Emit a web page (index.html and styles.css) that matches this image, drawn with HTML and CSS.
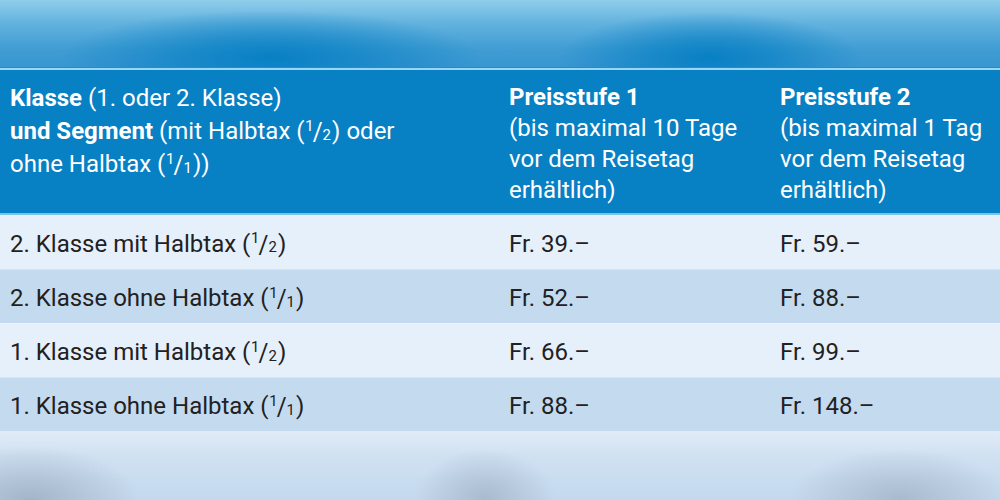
FILE: index.html
```html
<!DOCTYPE html>
<html lang="de">
<head>
<meta charset="utf-8">
<title>Preisstufen</title>
<link rel="stylesheet" href="styles.css">
</head>
<body>
<div class="page">
  <div class="top-band"></div>
  <div class="table">
    <div class="head">
      <div class="cell h1">
        <b>Klasse</b> (1. oder 2. Klasse)<br>
        <b>und Segment</b> (mit Halbtax (<span class="num">1</span><span class="sl">/</span><span class="den">2</span>) oder<br>
        ohne Halbtax (<span class="num">1</span><span class="sl">/</span><span class="den">1</span>))
      </div>
      <div class="cell h2"><b>Preisstufe 1</b><br>(bis maximal 10 Tage<br>vor dem Reisetag<br>erhältlich)</div>
      <div class="cell h3"><b>Preisstufe 2</b><br>(bis maximal 1 Tag<br>vor dem Reisetag<br>erhältlich)</div>
    </div>
    <div class="row light">
      <div class="cell">2. Klasse mit Halbtax (<span class="num">1</span><span class="sl">/</span><span class="den">2</span>)</div>
      <div class="cell">Fr. 39.–</div>
      <div class="cell">Fr. 59.–</div>
    </div>
    <div class="row dark">
      <div class="cell">2. Klasse ohne Halbtax (<span class="num">1</span><span class="sl">/</span><span class="den">1</span>)</div>
      <div class="cell">Fr. 52.–</div>
      <div class="cell">Fr. 88.–</div>
    </div>
    <div class="row light">
      <div class="cell">1. Klasse mit Halbtax (<span class="num">1</span><span class="sl">/</span><span class="den">2</span>)</div>
      <div class="cell">Fr. 66.–</div>
      <div class="cell">Fr. 99.–</div>
    </div>
    <div class="row dark">
      <div class="cell">1. Klasse ohne Halbtax (<span class="num">1</span><span class="sl">/</span><span class="den">1</span>)</div>
      <div class="cell">Fr. 88.–</div>
      <div class="cell">Fr. 148.–</div>
    </div>
  </div>
  <div class="bottom-band"></div>
</div>
</body>
</html>
```
FILE: styles.css
```css
* { box-sizing: border-box; }
html, body { margin: 0; padding: 0; }
body {
  width: 1000px;
  height: 500px;
  overflow: hidden;
  font-family: Roboto, "Noto Sans", sans-serif;
  font-size: 24px;
  color: #1f2123;
  background: #c6dbef;
}
.page { display: flex; flex-direction: column; height: 500px; }

.top-band {
  height: 68px;
  flex: none;
  background:
    radial-gradient(ellipse 210px 48px at 270px 58px, rgba(8,128,196,1), rgba(8,128,196,0.6) 45%, rgba(8,128,196,0) 100%),
    radial-gradient(ellipse 150px 46px at 710px 58px, rgba(8,128,196,1), rgba(8,128,196,0.6) 45%, rgba(8,128,196,0) 100%),
    linear-gradient(#8fcdeb 0%, #62b2de 35%, #3f9cd3 75%, #3896d0 100%);
  border-bottom: 1px solid #2d89c2;
}
.table { flex: none; }
.head {
  display: grid;
  grid-template-columns: 499px 271px 1fr;
  background: #0880c4;
  color: #ffffff;
  border-top: 2px solid #9ad6f1;
  border-bottom: 2px solid #79c4ea;
  height: 147px;
  padding: 12px 0 0 10px;
  line-height: 31px;
}
.head b { font-weight: 700; }
.head .h1 { line-height: 33px; }
.row {
  display: grid;
  grid-template-columns: 499px 271px 1fr;
  height: 54px;
  align-items: center;
  padding: 3px 0 0 10px;
}
.row.light { background: #e5f0fa; }
.row.dark { background: #c4dbef; }
.row + .row { border-top: 1px solid rgba(255,255,255,0.25); }

.num { font-size: 0.62em; line-height: 0; vertical-align: 0.55em; margin-left: 0.05em; }
.sl { display: inline-block; margin: 0 0 0 -0.04em; transform: scaleY(1.08); }
.den { font-size: 0.62em; line-height: 0; vertical-align: -0.05em; margin-right: 0.08em; }

.bottom-band {
  flex: 1;
  background:
    radial-gradient(ellipse 110px 55px at 30px 70px, rgba(160,178,198,0.95), rgba(160,178,198,0) 100%),
    radial-gradient(ellipse 70px 50px at 485px 68px, rgba(165,183,203,0.9), rgba(165,183,203,0) 100%),
    radial-gradient(ellipse 110px 50px at 900px 68px, rgba(165,183,203,0.9), rgba(165,183,203,0) 100%),
    linear-gradient(#e0ebf7 0%, #cfe0f1 40%, #c4d9ee 100%);
}
```
